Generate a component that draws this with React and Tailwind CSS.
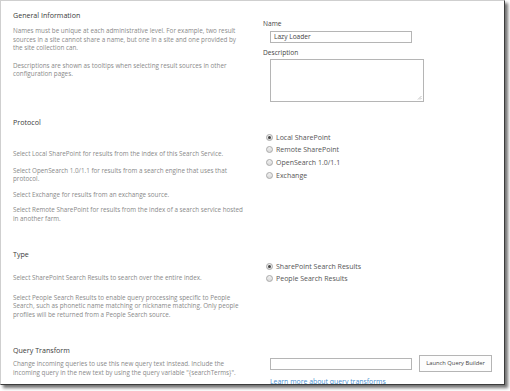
import React from "react";

const font = { fontFamily: '"Open Sans", "Noto Sans", sans-serif' };

function Radio({ checked, label }) {
  return (
    <div className="flex items-center h-[12.6px]">
      <span className="w-[7px] h-[7px] rounded-full border border-[#a9a9a9] bg-gradient-to-b from-[#f2f2f2] to-[#d9d9d9] flex items-center justify-center">
        {checked && <span className="w-[3px] h-[3px] rounded-full bg-[#444]" />}
      </span>
      <span className="ml-[3px] text-[7px] text-[#555] whitespace-nowrap leading-none">{label}</span>
    </div>
  );
}

function Heading({ children }) {
  return <div className="text-[7.1px] leading-[10px] text-[#3a3a3a] whitespace-nowrap">{children}</div>;
}

function Body({ children, className = "" }) {
  return <p className={"text-[6.3px] leading-[8.6px] text-[#8a8a8a] whitespace-nowrap " + className}>{children}</p>;
}

export default function App() {
  return (
    <div className="w-[510px] h-[391px] bg-white" style={font}>
      <div className="w-[505px] h-[385px] border border-t-[#cfcfcf] border-l-[#cfcfcf] border-r-[#3c3c3c] border-b-[#3c3c3c] shadow-[3px_3px_3px_rgba(0,0,0,0.55)] overflow-hidden bg-white">
        {/* General Information */}
        <div className="flex h-[107px]">
          <div className="w-[250px] pl-[12px] pt-[9px]">
            <Heading>General Information</Heading>
            <Body className="mt-[7px]">
              Names must be unique at each administrative level. For example, two result<br />
              sources in a site cannot share a name, but one in a site and one provided by<br />
              the site collection can.
            </Body>
            <Body className="mt-[9px]">
              Descriptions are shown as tooltips when selecting result sources in other<br />
              configuration pages.
            </Body>
          </div>
          <div className="flex-1 pl-[12px] pt-[18px]">
            <div className="text-[6.6px] leading-[10px] text-[#444]">Name</div>
            <div className="ml-[7px] mt-[2px] w-[142px] h-[12px] border border-[#b5b5b5] flex items-center px-[3px] text-[6.6px] text-[#444]">
              Lazy Loader
            </div>
            <div className="mt-[5px] text-[6.6px] leading-[10px] text-[#444]">Description</div>
            <div className="ml-[7px] mt-[1px] w-[154px] h-[43px] border border-[#b5b5b5] relative">
              <svg className="absolute right-[1px] bottom-[1px]" width="5" height="5" viewBox="0 0 5 5">
                <path d="M4.5 1 L1 4.5 M4.5 3 L3 4.5" stroke="#999" strokeWidth="0.6" />
              </svg>
            </div>
          </div>
        </div>

        {/* Protocol */}
        <div className="flex h-[132px]">
          <div className="w-[250px] pl-[12px] pt-[9px]">
            <Heading>Protocol</Heading>
            <Body className="mt-[23px]">Select Local SharePoint for results from the index of this Search Service.</Body>
            <Body className="mt-[8px]">
              Select OpenSearch 1.0/1.1 for results from a search engine that uses that<br />
              protocol.
            </Body>
            <Body className="mt-[7px]">Select Exchange for results from an exchange source.</Body>
            <Body className="mt-[7px]">
              Select Remote SharePoint for results from the index of a search service hosted<br />
              in another farm.
            </Body>
          </div>
          <div className="flex-1 pl-[15px] pt-[23px]">
            <Radio checked label="Local SharePoint" />
            <Radio label="Remote SharePoint" />
            <Radio label="OpenSearch 1.0/1.1" />
            <Radio label="Exchange" />
          </div>
        </div>

        {/* Type */}
        <div className="flex h-[96px]">
          <div className="w-[250px] pl-[12px] pt-[9px]">
            <Heading>Type</Heading>
            <Body className="mt-[15px]">Select SharePoint Search Results to search over the entire index.</Body>
            <Body className="mt-[11px]">
              Select People Search Results to enable query processing specific to People<br />
              Search, such as phonetic name matching or nickname matching. Only people<br />
              profiles will be returned from a People Search source.
            </Body>
          </div>
          <div className="flex-1 pl-[15px] pt-[20px]">
            <Radio checked label="SharePoint Search Results" />
            <Radio label="People Search Results" />
          </div>
        </div>

        {/* Query Transform */}
        <div className="flex h-[60px]">
          <div className="w-[250px] pl-[12px] pt-[9px]">
            <Heading>Query Transform</Heading>
            <Body className="mt-[5px]">
              Change incoming queries to use this new query text instead. Include the<br />
              incoming query in the new text by using the query variable "{"{searchTerms}"}".
            </Body>
          </div>
          <div className="flex-1 pl-[19px] pt-[19px]">
            <div className="flex items-center">
              <div className="w-[142px] h-[12px] border border-[#b5b5b5]" />
              <div className="ml-[7px] w-[73px] h-[17px] border border-[#b5b5b5] bg-[#fdfdfd] flex items-center justify-center text-[5.8px] text-[#444] whitespace-nowrap">
                Launch Query Builder
              </div>
            </div>
            <div className="mt-[5px] text-[6.9px] text-[#4a90d0] whitespace-nowrap leading-[9px]">Learn more about query transforms</div>
          </div>
        </div>
      </div>
    </div>
  );
}
